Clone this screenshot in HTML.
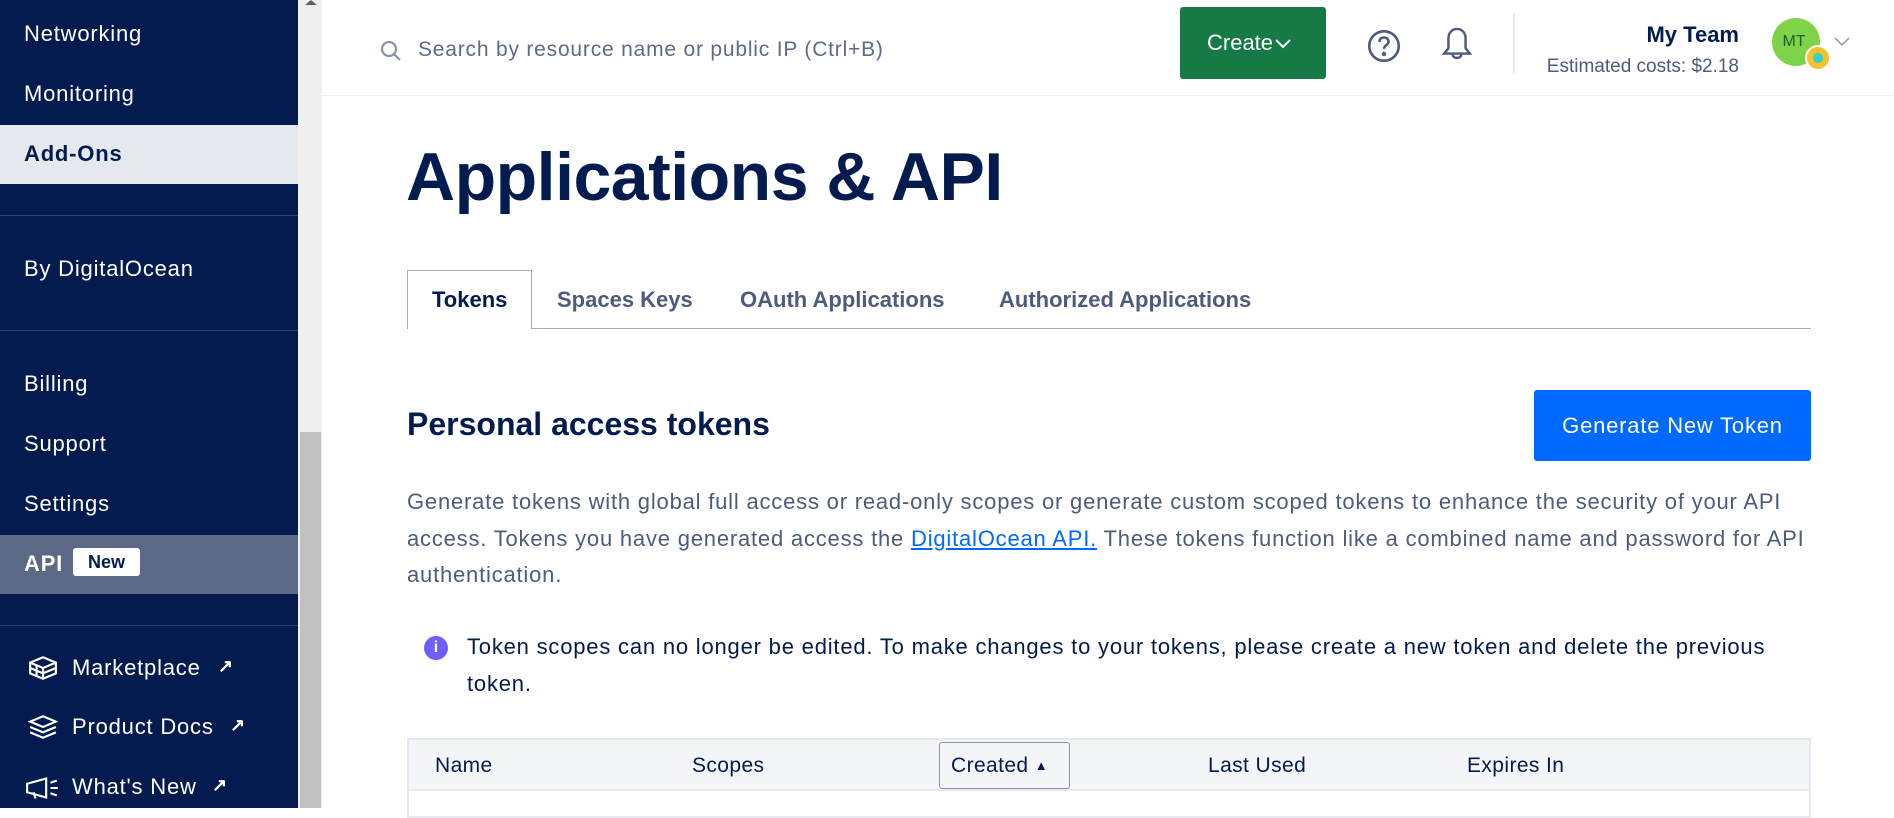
<!DOCTYPE html>
<html><head><meta charset="utf-8"><style>
*{margin:0;padding:0;box-sizing:border-box}
body{width:1894px;height:808px;overflow:hidden;background:#fff;font-family:"Liberation Sans",sans-serif;position:relative;color:#031b4e}
.a{position:absolute;white-space:nowrap}
#sb{position:absolute;left:0;top:0;width:298px;height:808px;background:#031b4e}
.si{position:absolute;left:24px;color:#fff;font-size:22px;line-height:24px;letter-spacing:0.8px}
.hl{position:absolute;left:0;width:298px;height:1px;background:#2d4170}
.col{font-size:21px;color:#031b4e;top:754px;line-height:24px;letter-spacing:0.4px}
p.t{font-size:22px;color:#4d5b7c;line-height:36.5px;letter-spacing:0.8px}
</style></head><body>
<div id="sb">
<div class="si" style="top:22px">Networking</div>
<div class="si" style="top:82px">Monitoring</div>
<div class="a" style="left:0;top:125px;width:298px;height:59px;background:#e5e8ed"></div>
<div class="si" style="top:142px;color:#031b4e;font-weight:bold">Add-Ons</div>
<div class="hl" style="top:215px"></div>
<div class="si" style="top:257px">By DigitalOcean</div>
<div class="hl" style="top:330px"></div>
<div class="si" style="top:372px">Billing</div>
<div class="si" style="top:432px">Support</div>
<div class="si" style="top:492px">Settings</div>
<div class="a" style="left:0;top:535px;width:298px;height:59px;background:#5b6987"></div>
<div class="si" style="top:552px;font-weight:bold">API</div>
<div class="a" style="left:73px;top:548px;width:67px;height:28px;background:#fff;border-radius:3px;color:#031b4e;font-weight:bold;font-size:18px;line-height:28px;text-align:center">New</div>
<div class="hl" style="top:625px"></div>
<svg class="a" style="left:28px;top:654px" width="30" height="28" viewBox="0 0 28 24" fill="none" stroke="#fff" stroke-width="2"><path d="M14 2L26 7V17L14 22L2 17V7Z M2 7L14 12L26 7 M14 12V22 M8 9.5V19.5 M2 12L14 17L26 12"/></svg>
<div class="si" style="left:72px;top:656px">Marketplace</div>
<div class="si" style="left:218px;top:654px;font-size:18px;font-weight:bold">↗</div>
<svg class="a" style="left:28px;top:713px" width="30" height="28" viewBox="0 0 28 24" fill="none" stroke="#fff" stroke-width="2"><path d="M14 2L26 7L14 12L2 7Z M2 12L14 17L26 12 M2 17L14 22L26 17"/></svg>
<div class="si" style="left:72px;top:715px">Product Docs</div>
<div class="si" style="left:230px;top:713px;font-size:18px;font-weight:bold">↗</div>
<svg class="a" style="left:25px;top:775px" width="36" height="26" viewBox="0 0 34 24" fill="none" stroke="#fff" stroke-width="2"><path d="M2 8L20 3V21L2 16Z M8 16L10 22 M24 7L30 5 M24 12H31 M24 17L30 19"/></svg>
<div class="si" style="left:72px;top:775px">What's New</div>
<div class="si" style="left:212px;top:773px;font-size:18px;font-weight:bold">↗</div>
</div>
<div class="a" style="left:298px;top:0;width:24px;height:808px;background:#f0f0f0"></div>
<div class="a" style="left:300px;top:432px;width:21px;height:376px;background:#c1c1c1"></div>
<div class="a" style="left:305px;top:0;width:0;height:0;border-left:6px solid transparent;border-right:6px solid transparent;border-bottom:5px solid #606060"></div>

<div class="a" style="left:322px;top:95px;width:1572px;height:1px;background:#eceef2"></div>
<svg class="a" style="left:380px;top:40px" width="22" height="22" viewBox="0 0 22 22" fill="none" stroke="#8a94a8" stroke-width="2.2"><circle cx="9" cy="9" r="7"/><path d="M14 14L20 20"/></svg>
<div class="a" style="left:418px;top:38px;font-size:21px;color:#5e6a86;letter-spacing:0.8px">Search by resource name or public IP (Ctrl+B)</div>
<div class="a" style="left:1180px;top:7px;width:146px;height:72px;background:#157a45;border-radius:3px;color:#fff;font-size:22px;line-height:72px;padding-left:27px">Create<svg style="margin-left:2px;vertical-align:middle" width="16" height="10" viewBox="0 0 16 10" fill="none" stroke="#fff" stroke-width="2"><path d="M1 1L8 8L15 1"/></svg></div>
<svg class="a" style="left:1367px;top:29px" width="34" height="34" viewBox="0 0 30 30" fill="none" stroke="#4d5b7c" stroke-width="2.3"><circle cx="15" cy="15" r="13"/><path d="M11 11.5C11 8.5 13 7.5 15 7.5S19 8.8 19 11.3C19 14 15 14.5 15 17.5"/><circle cx="15" cy="22" r="0.8" fill="#4d5b7c"/></svg>
<svg class="a" style="left:1442px;top:26px" width="30" height="38" viewBox="0 0 28 34" fill="none" stroke="#4d5b7c" stroke-width="2.3"><path d="M14 2C9 2 6 6 6 11V20L2 25H26L22 20V11C22 6 19 2 14 2Z M10 26C10 30 18 30 18 26"/></svg>
<div class="a" style="left:1513px;top:13px;width:2px;height:60px;background:#e5e8ed"></div>
<div class="a" style="right:155px;top:22px;font-size:22px;font-weight:bold;color:#031b4e">My Team</div>
<div class="a" style="right:155px;top:56px;font-size:19px;color:#4d5b7c">Estimated costs: $2.18</div>
<div class="a" style="left:1772px;top:18px;width:48px;height:48px;border-radius:50%;background:#7ed348;color:#1e5d2a;font-size:16px;line-height:48px;text-align:center;padding-right:4px">MT</div>
<div class="a" style="left:1805px;top:45px;width:26px;height:26px;border-radius:50%;background:#f7c02e;border:2px solid #fff"></div>
<div class="a" style="left:1813px;top:53px;width:10px;height:10px;border-radius:50%;background:#34d1c9"></div>
<svg class="a" style="left:1834px;top:37px" width="16" height="10" viewBox="0 0 16 10" fill="none" stroke="#8a94a8" stroke-width="1.5"><path d="M1 1L8 8L15 1"/></svg>

<div class="a" style="left:406px;top:138px;font-size:68px;font-weight:bold;letter-spacing:-0.5px;color:#031b4e">Applications &amp; API</div>

<div class="a" style="left:407px;top:328px;width:1404px;height:1px;background:#a4adbf"></div>
<div class="a" style="left:407px;top:270px;width:125px;height:59px;background:#fff;border:1px solid #a4adbf;border-bottom:none"></div>
<div class="a" style="left:432px;top:287px;font-size:22px;font-weight:bold;color:#031b4e">Tokens</div>
<div class="a" style="left:557px;top:287px;font-size:22px;font-weight:bold;color:#4d5b7c">Spaces Keys</div>
<div class="a" style="left:740px;top:287px;font-size:22px;font-weight:bold;color:#4d5b7c">OAuth Applications</div>
<div class="a" style="left:999px;top:287px;font-size:22px;font-weight:bold;color:#4d5b7c">Authorized Applications</div>

<div class="a" style="left:407px;top:406px;font-size:32px;font-weight:bold;color:#031b4e">Personal access tokens</div>
<div class="a" style="left:1534px;top:390px;width:277px;height:71px;background:#0069ff;border-radius:3px;color:#fff;font-size:22px;line-height:71px;text-align:center;letter-spacing:0.8px">Generate New Token</div>

<p class="t a" style="left:407px;top:484px;white-space:normal;width:1404px">Generate tokens with global full access or read-only scopes or generate custom scoped tokens to enhance the security of your API access. Tokens you have generated access the <span style="color:#0069ff;text-decoration:underline">DigitalOcean API.</span> These tokens function like a combined name and password for API authentication.</p>

<div class="a" style="left:424px;top:636px;width:24px;height:24px;border-radius:50%;background:#6f5ef7;color:#fff;font-size:16px;font-weight:bold;line-height:24px;text-align:center">i</div>
<p class="t a" style="left:467px;top:629px;white-space:normal;width:1320px;color:#031b4e">Token scopes can no longer be edited. To make changes to your tokens, please create a new token and delete the previous token.</p>

<div class="a" style="left:407px;top:738px;width:1404px;height:80px;border:2px solid #e5e8ed;background:#fff"></div>
<div class="a" style="left:409px;top:740px;width:1400px;height:51px;background:#f3f5f9;border-bottom:2px solid #e5e8ed"></div>
<div class="a col" style="left:435px">Name</div>
<div class="a col" style="left:692px">Scopes</div>
<div class="a" style="left:939px;top:742px;width:131px;height:47px;border:1px solid #8a94a8;border-radius:3px"></div>
<div class="a col" style="left:951px">Created <span style="font-size:13px;vertical-align:2px">▲</span></div>
<div class="a col" style="left:1208px">Last Used</div>
<div class="a col" style="left:1467px">Expires In</div>
</body></html>
